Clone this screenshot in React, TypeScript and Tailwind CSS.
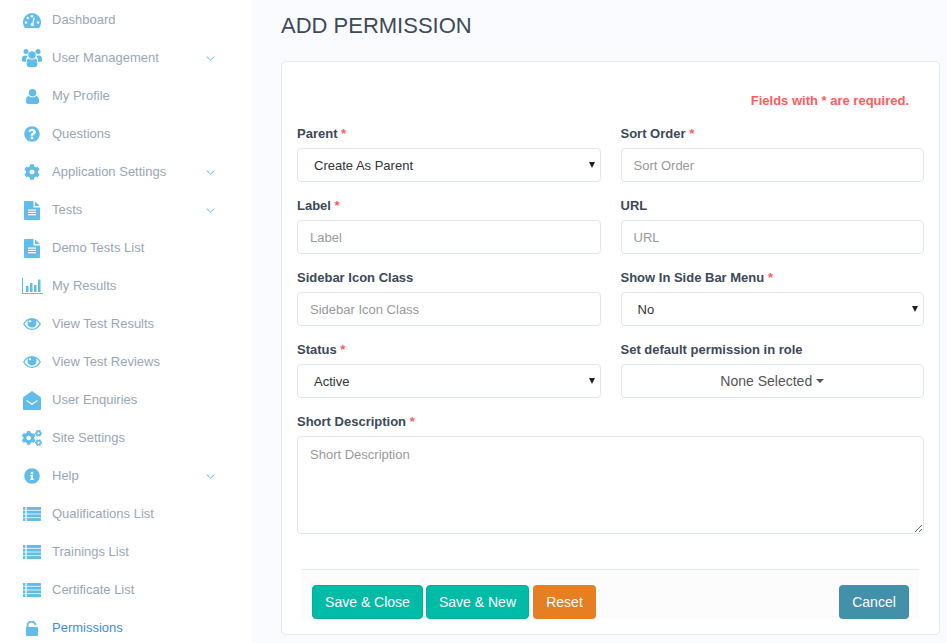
import type { ReactNode } from "react";
import { FaCog, FaCogs, FaInfoCircle, FaQuestionCircle } from "react-icons/fa";

const DashIcon = () => (
    <svg width="18" height="15" viewBox="0 0 18 15" fill="currentColor">
        <path d="M9 0a9 9 0 0 0-9 9c0 2.3.7 4.3 2 6h14c1.300-1.700 2-3.700 2-6a9 9 0 0 0-9-9z" />
        <g fill="#fff">
            <circle cx="3" cy="9.500" r="1.300" />
            <circle cx="4.800" cy="5" r="1.300" />
            <circle cx="9" cy="3.200" r="1.300" />
            <circle cx="15" cy="9.500" r="1.300" />
            <circle cx="9.300" cy="11.500" r="1.700" />
            <path d="M9 11l1.800-6.500 1 .3L10.200 11.500z" />
        </g>
    </svg>
);

const UsersIcon = () => (
    <svg width="20" height="18" viewBox="0 0 20 18" fill="currentColor">
        <circle cx="4" cy="2.500" r="2.500" />
        <circle cx="16" cy="2.500" r="2.500" />
        <circle cx="10" cy="6" r="3.700" />
        <path d="M3 6.500c-1.800 0-3 1-3 3v2c0 .8.600 1.200 1.500 1.200H4v-2c0-1.200.6-2.200 1.600-3-.6-.8-1.500-1.200-2.600-1.200z" />
        <path d="M17 6.500c1.800 0 3 1 3 3v2c0 .8-.6 1.200-1.500 1.200H16v-2c0-1.200-.6-2.200-1.600-3 .6-.8 1.500-1.200 2.600-1.200z" />
        <path d="M6.800 9.500c.8.800 2 1.200 3.200 1.200s2.400-.4 3.200-1.200c1.400.3 2 1.600 2 3.500v3.300c0 1-.7 1.700-1.800 1.700H6.600c-1.100 0-1.800-.7-1.800-1.700V13c0-1.900.6-3.200 2-3.500z" />
    </svg>
);

const UserIcon = () => (
    <svg width="13" height="15" viewBox="0 0 13 15" fill="currentColor">
        <circle cx="6.500" cy="3.700" r="3.700" />
        <path d="M2.700 7c1 .8 2.400 1.300 3.800 1.300s2.800-.5 3.800-1.300c1.800.3 2.700 2 2.700 4.500v1.300c0 1.300-.9 2.200-2.200 2.200H2.200C.9 15 0 14.100 0 12.800v-1.300C0 9 .9 7.300 2.700 7z" />
    </svg>
);

const FileIcon = () => (
    <svg width="16" height="19" viewBox="0 0 16 19" fill="currentColor">
        <path d="M0 1a1 1 0 0 1 1-1h8.500v6.500H16V18a1 1 0 0 1-1 1H1a1 1 0 0 1-1-1z" />
        <path d="M11 .5l4.700 4.500H11z" />
        <g fill="#fff">
            <rect x="4" y="8.500" width="8" height="1.200" />
            <rect x="4" y="10.800" width="8" height="1.200" />
            <rect x="4" y="13.100" width="8" height="1.200" />
        </g>
    </svg>
);

const ChartIcon = () => (
    <svg width="21" height="16" viewBox="0 0 21 16" fill="currentColor">
        <rect x="0" y="0" width="1" height="16" />
        <rect x="0" y="15" width="21" height="1" />
        <rect x="4" y="8" width="2.500" height="6" />
        <rect x="8" y="5" width="2.500" height="9" />
        <rect x="12" y="7" width="2.500" height="7" />
        <rect x="16" y="1.500" width="2.500" height="12.500" />
    </svg>
);

const EyeIcon = () => (
    <svg width="18" height="12" viewBox="0 0 18 12" fill="currentColor">
        <path d="M9 0C5.300 0 2.100 2.200 0 6c2.100 3.800 5.300 6 9 6s6.900-2.200 9-6c-2.100-3.800-5.300-6-9-6zm0 10.800C6 10.800 3.300 9 1.500 6 2.500 4.300 3.800 3 5.300 2.200 4.800 3 4.500 3.900 4.500 5a4.500 4.500 0 0 0 9 0c0-1.100-.3-2-.8-2.800 1.500.8 2.800 2.100 3.800 3.800-1.800 3-4.500 4.800-7.500 4.800z" />
        <path d="M5.500 1.800C6.500 1.300 7.700 1 9 1s2.500.3 3.500 .8C13 2.600 13 4 13 5a4 4 0 0 1-8 0c0-1 0-2.400.5-3.200z" />
        <ellipse cx="7" cy="3.300" rx="1.300" ry="1" fill="#fff" />
    </svg>
);

const EnvelopeIcon = () => (
    <svg width="18" height="19" viewBox="0 0 18 19" fill="currentColor">
        <path d="M9 0l9 6.500V18a1 1 0 0 1-1 1H1a1 1 0 0 1-1-1V6.500z" />
        <path d="M3.500 9.500L9 13.200l5.500-3.700" fill="none" stroke="#fff" strokeWidth="1.300" />
    </svg>
);

const ListIcon = () => (
    <svg width="18" height="14" viewBox="0 0 18 14" fill="currentColor">
        {[0, 3.700, 7.400, 11.100].map((y) => (
            <g key={y}>
                <rect x="0" y={y} width="2.400" height="2.900" />
                <rect x="3.700" y={y} width="14.300" height="2.900" />
            </g>
        ))}
    </svg>
);

const UnlockIcon = () => (
    <svg width="12" height="15" viewBox="0 0 12 15" fill="currentColor">
        <path d="M.5 6V4a4 4 0 0 1 8-.5" fill="none" stroke="currentColor" strokeWidth="1.800" transform="translate(1 .8)" />
        <rect x="0" y="6" width="12" height="9" rx="1" />
    </svg>
);

const ArrowIcon = () => (
    <svg width="9" height="5" viewBox="0 0 9 5" fill="none" className="mr-[37px] text-[#60bcea]">
        <path d="M.5.500l4 3.500 4-3.500" stroke="currentColor" strokeWidth="1" />
    </svg>
);

const menu: { label: string; icon: ReactNode; arrow?: boolean; active?: boolean }[] = [
    { label: "Dashboard", icon: <DashIcon /> },
    { label: "User Management", icon: <UsersIcon />, arrow: true },
    { label: "My Profile", icon: <UserIcon /> },
    { label: "Questions", icon: <FaQuestionCircle size={16} /> },
    { label: "Application Settings", icon: <FaCog size={16} />, arrow: true },
    { label: "Tests", icon: <FileIcon />, arrow: true },
    { label: "Demo Tests List", icon: <FileIcon /> },
    { label: "My Results", icon: <ChartIcon /> },
    { label: "View Test Results", icon: <EyeIcon /> },
    { label: "View Test Reviews", icon: <EyeIcon /> },
    { label: "User Enquiries", icon: <EnvelopeIcon /> },
    { label: "Site Settings", icon: <FaCogs size={20} /> },
    { label: "Help", icon: <FaInfoCircle size={16} />, arrow: true },
    { label: "Qualifications List", icon: <ListIcon /> },
    { label: "Trainings List", icon: <ListIcon /> },
    { label: "Certificate List", icon: <ListIcon /> },
    { label: "Permissions", icon: <UnlockIcon />, active: true },
];

const inputClass = "h-[34px] w-full rounded-[4px] border border-[#dfe6f1] bg-white px-3 text-[13px] text-[#333] placeholder:text-[#999] outline-none";

const Label = ({ text, required }: { text: string; required?: boolean }) => (
    <label className="mb-[7px] block h-[15px] text-[13px] leading-[15px] font-bold text-[#3d4858]">
        {text} {required && <span className="text-[#ff5b5b]">*</span>}
    </label>
);

const Field = ({ label, required, children }: { label: string; required?: boolean; children: ReactNode }) => (
    <div>
        <Label text={label} required={required} />
        {children}
    </div>
);

const SelectBox = ({ value }: { value: string }) => (
    <div className="relative">
        <select className="h-[34px] w-full appearance-none rounded-[4px] border border-[#dfe6f1] bg-white pt-[2px] pl-4 text-[13px] text-[#333] outline-none" defaultValue={value}>
            <option value={value}>{value}</option>
        </select>
        <span className="pointer-events-none absolute top-[14px] right-[6px] h-0 w-0 border-x-[3px] border-t-[6px] border-x-transparent border-t-[#222]"></span>
    </div>
);

const App = () => {
    return (
        <div className="flex h-[643px] w-[947px] overflow-hidden bg-[#f9fbfe] font-['Liberation_Sans',Arial,sans-serif]">
            <aside className="w-[252px] shrink-0 bg-white pt-px">
                {menu.map((item) => (
                    <div key={item.label} className="flex h-[38px] items-center">
                        <div className="flex w-[52px] shrink-0 justify-center pl-[12px] text-[#60bcea]">{item.icon}</div>
                        <span className={`flex-1 text-[13px] ${item.active ? "text-[#3a8fe0]" : "text-[#9aa6b4]"}`}>{item.label}</span>
                        {item.arrow && <ArrowIcon />}
                    </div>
                ))}
            </aside>

            <main className="flex-1 pl-[29px] pr-[7px]">
                <h1 className="h-[61px] pt-[13px] text-[22px] leading-[26px] font-normal text-[#3f4a59]">ADD PERMISSION</h1>
                <div className="h-[574px] rounded-[5px] border border-[#e2e9f2] bg-white px-[15px]">
                    <p className="pt-[31px] pr-[15px] text-right text-[13px] leading-[15px] font-bold text-[#ff5b5b]">Fields with * are required.</p>

                    <div className="mt-[18px] grid grid-cols-2 gap-x-[20px] gap-y-[16px]">
                        <Field label="Parent" required>
                            <SelectBox value="Create As Parent" />
                        </Field>
                        <Field label="Sort Order" required>
                            <input className={inputClass} placeholder="Sort Order" />
                        </Field>
                        <Field label="Label" required>
                            <input className={inputClass} placeholder="Label" />
                        </Field>
                        <Field label="URL">
                            <input className={inputClass} placeholder="URL" />
                        </Field>
                        <Field label="Sidebar Icon Class">
                            <input className={inputClass} placeholder="Sidebar Icon Class" />
                        </Field>
                        <Field label="Show In Side Bar Menu" required>
                            <SelectBox value="No" />
                        </Field>
                        <Field label="Status" required>
                            <SelectBox value="Active" />
                        </Field>
                        <Field label="Set default permission in role">
                            <button className="flex h-[34px] w-full items-center justify-center rounded-[4px] border border-[#dfe6f1] bg-white text-[14px] text-[#555]">
                                None Selected
                                <span className="ml-[4px] h-0 w-0 border-x-[4px] border-t-[4px] border-x-transparent border-t-[#555]"></span>
                            </button>
                        </Field>
                    </div>

                    <div className="mt-[16px]">
                        <Label text="Short Description" required />
                        <textarea className="block h-[98px] w-full rounded-[4px] border border-[#dfe6f1] bg-white px-3 py-[9px] text-[13px] leading-[18px] text-[#333] placeholder:text-[#999] outline-none" placeholder="Short Description"></textarea>
                    </div>

                    <div className="mx-[5px] mt-[35px] flex h-[50px] items-end border-t border-[#e2e9f2] bg-[#fcfcfd] px-[10px]">
                        <div className="flex h-[34px] w-full text-[14px] text-white">
                            <button className="mr-[3px] w-[111px] rounded-[4px] border border-[#00ae9a] bg-[#00bba5]">Save &amp; Close</button>
                            <button className="mr-[4px] w-[103px] rounded-[4px] border border-[#00ae9a] bg-[#00bba5]">Save &amp; New</button>
                            <button className="w-[63px] rounded-[4px] bg-[#e67e22]">Reset</button>
                            <button className="ml-auto w-[70px] rounded-[4px] bg-[#4390ab]">Cancel</button>
                        </div>
                    </div>
                </div>
            </main>
        </div>
    );
};

export default App;
